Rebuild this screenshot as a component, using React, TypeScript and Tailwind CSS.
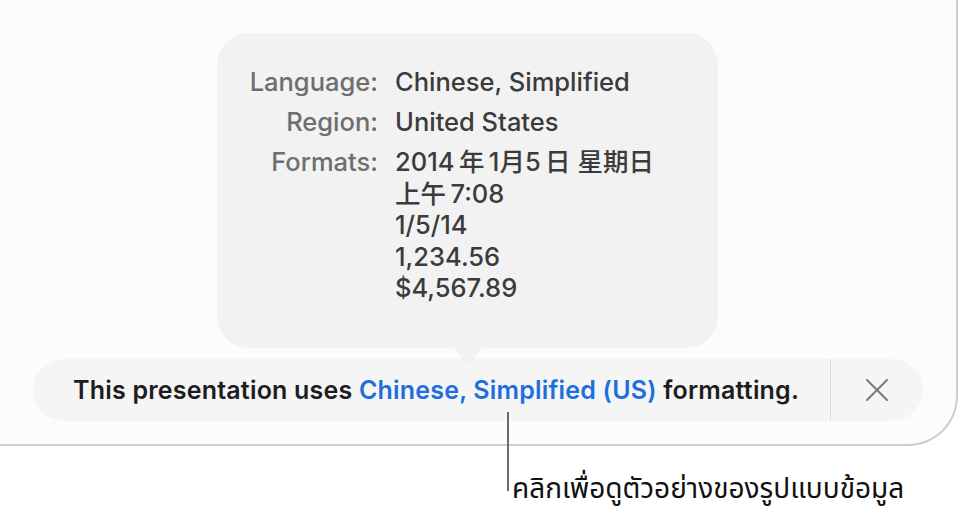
const formats = ['2014\u2009年\u20091月5\u2009日 星期日', '上午\u20097:08', '1/5/14', '1,234.56', '$4,567.89'];

function Popover() {
  return (
    <div className="relative ml-[217px] w-[501px] h-[315px] rounded-[32px] bg-[#f2f2f2] pt-[33px]">
      <div className="grid grid-cols-[161px_auto] gap-x-[17px] gap-y-[8.5px] text-[25.5px] leading-[31.5px] font-medium">
        <div className="text-right text-[#6e6e6e]">Language:</div>
        <div className="text-[#3b3b3b]">Chinese, Simplified</div>
        <div className="text-right text-[#6e6e6e]">Region:</div>
        <div className="text-[#3b3b3b]">United States</div>
        <div className="text-right text-[#6e6e6e]">Formats:</div>
        <div className="text-[#3b3b3b]">
          {formats.map((f) => (
            <div key={f} className="whitespace-pre">{f}</div>
          ))}
        </div>
      </div>
      <svg
        className="absolute left-[226px] -bottom-[22px]"
        width="50"
        height="23"
        viewBox="0 0 50 23"
      >
        <path d="M0 0 C12 0 16 4 20 14 Q25 25 30 14 C34 4 38 0 50 0 Z" fill="#f2f2f2" />
      </svg>
    </div>
  );
}

export default function App() {
  return (
    <div
      className="relative w-[961px] h-[518px] overflow-hidden bg-white"
      style={{ fontFamily: 'Inter, "Noto Sans CJK SC", "Noto Sans Thai", "Noto Sans", sans-serif' }}
    >
      <div className="w-[958px] h-[446px] bg-[#fcfcfc] border-r-2 border-b-2 border-[#cdcdcd] rounded-br-[50px] pt-[33px]">
        <Popover />
        <div className="mt-[11px] ml-[33px] w-[890px] h-[62px] rounded-full bg-[#f5f5f5] flex items-center">
          <div className="flex-1 pl-[40px] pt-[2px] text-[25px] font-semibold text-[#1d1d1f] tracking-[0.2px]">
            This presentation uses <span className="text-[#1e6fdc]">Chinese, Simplified (US)</span> formatting.
          </div>
          <div className="w-px self-stretch bg-[#dcdcdc]" />
          <div className="w-[92px] flex items-center justify-center">
            <svg width="22" height="22" viewBox="0 0 22 22">
              <path d="M1 1 21 21 M21 1 1 21" stroke="#7a7a7a" strokeWidth="2" strokeLinecap="round" />
            </svg>
          </div>
        </div>
      </div>
      <div className="absolute left-[507px] top-[412px] w-[1.5px] h-[79px] bg-[#6b6b6b]" />
      <div className="pl-[512px] pt-[24px] text-[28px] leading-[36px] text-[#111]">
        คลิกเพื่อดูตัวอย่างของรูปแบบข้อมูล
      </div>
    </div>
  );
}
